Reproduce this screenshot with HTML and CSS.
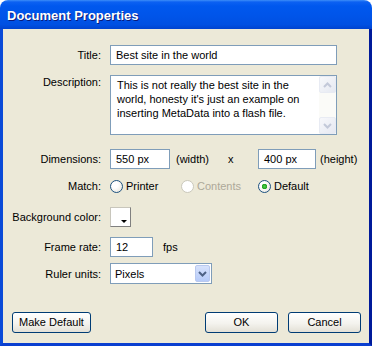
FILE: index.html
```html
<!doctype html>
<html lang="en">
<head>
	<meta charset="UTF-8">
	<title>Document Properties</title>
	<link rel="stylesheet" href="styles.css">
</head>
<body>
	<div class="window">
		<div class="titlebar">Document Properties</div>
		<div class="frame">
			<div class="row r-title">
				<span class="lbl">Title:</span>
				<div class="field f-title">Best site in the world</div>
			</div>
			<div class="row r-desc">
				<span class="lbl">Description:</span>
				<div class="area">
					<div class="area-text">This is not really the best site in the<br>world, honesty it's just an example on<br>inserting MetaData into a flash file.</div>
					<div class="scroll">
						<span class="sbtn"><svg width="9" height="6" viewBox="0 0 9 6"><path d="M1 5 L4.5 1.5 L8 5" fill="none" stroke="#c3c9d9" stroke-width="2"/></svg></span>
						<span class="track"></span>
						<span class="sbtn"><svg width="9" height="6" viewBox="0 0 9 6"><path d="M1 1 L4.5 4.5 L8 1" fill="none" stroke="#c3c9d9" stroke-width="2"/></svg></span>
					</div>
				</div>
			</div>
			<div class="row r-dims">
				<span class="lbl">Dimensions:</span>
				<div class="field f-w">550 px</div>
				<span class="unit-w">(width)</span>
				<span class="times">x</span>
				<div class="field f-h">400 px</div>
				<span class="unit-h">(height)</span>
			</div>
			<div class="row r-match">
				<span class="lbl">Match:</span>
				<span class="opt o-printer"><span class="radio"></span>Printer</span>
				<span class="opt o-contents disabled"><span class="radio"></span>Contents</span>
				<span class="opt o-default"><span class="radio checked"></span>Default</span>
			</div>
			<div class="row r-bg">
				<span class="lbl">Background color:</span>
				<span class="swatch"><span class="swatch-arrow"></span></span>
			</div>
			<div class="row r-rate">
				<span class="lbl">Frame rate:</span>
				<div class="field f-rate">12</div>
				<span class="fps">fps</span>
			</div>
			<div class="row r-ruler">
				<span class="lbl">Ruler units:</span>
				<div class="select">
					<span class="select-text">Pixels</span>
					<span class="select-btn"><svg width="9" height="6" viewBox="0 0 9 6"><path d="M1 1 L4.5 4.5 L8 1" fill="none" stroke="#4d6185" stroke-width="2"/></svg></span>
				</div>
			</div>
			<div class="buttons">
				<span class="btn b-default">Make Default</span>
				<span class="spacer"></span>
				<span class="btn b-ok">OK</span>
				<span class="btn b-cancel">Cancel</span>
			</div>
		</div>
	</div>
</body>
</html>
```
FILE: styles.css
```css
body {
	margin: 0;
	background-color: #ffffff;
	font: 400 11px "Liberation Sans", Arial, sans-serif;
	color: #000000;
}

.window {
	display: flex;
	flex-direction: column;
	width: 372px;
	height: 346px;
}

.titlebar {
	flex: none;
	height: 29px;
	padding-left: 7px;
	border-radius: 8px 8px 0 0;
	background: linear-gradient(#3d8ef8 0, #0c61f2 2px, #0058ee 6px, #0055ea 50%, #0050e2 85%, #0043cf 100%);
	color: #ffffff;
	font: 700 13px "Liberation Sans", Arial, sans-serif;
	line-height: 31px;
	text-shadow: 1px 1px #0a1a7a;
}

.frame {
	display: flex;
	flex: 1;
	flex-direction: column;
	border: 3px solid;
	border-top: 0;
	border-color: #0a4ad8 #001a9a #0a3fd0 #0a4ad8;
	background-color: #ece9d8;
}

.row {
	display: flex;
	align-items: center;
}

.lbl {
	flex: none;
	width: 98px;
	margin-right: 9px;
	text-align: right;
}

.field {
	box-sizing: border-box;
	height: 20px;
	padding: 0 5px;
	border: 1px solid #7f9db9;
	background-color: #ffffff;
	line-height: 18px;
	white-space: nowrap;
}

.r-title {
	margin-top: 16px;
}

.f-title {
	width: 227px;
}

.r-desc {
	align-items: flex-start;
	margin-top: 10px;
}

.r-desc .lbl {
	padding-top: 1px;
}

.area {
	display: flex;
	box-sizing: border-box;
	width: 227px;
	height: 60px;
	border: 1px solid #7f9db9;
	background-color: #ffffff;
}

.area-text {
	flex: 1;
	padding: 2px 6px;
	line-height: 14px;
	white-space: nowrap;
}

.scroll {
	display: flex;
	flex-direction: column;
	width: 17px;
	background-color: #fbfbf8;
}

.sbtn {
	display: flex;
	align-items: center;
	justify-content: center;
	box-sizing: border-box;
	height: 17px;
	border: 1px solid #e8ebf3;
	border-radius: 2px;
	background: linear-gradient(135deg, #f7f8fb, #e6e9f2);
}

.track {
	flex: 1;
}

.r-dims {
	margin-top: 14px;
}

.f-w {
	width: 60px;
}

.unit-w {
	width: 52px;
	margin-left: 6px;
}

.times {
	width: 30px;
}

.f-h {
	width: 58px;
}

.unit-h {
	margin-left: 4px;
}

.r-match {
	height: 16px;
	margin-top: 9px;
}

.opt {
	display: flex;
	align-items: center;
}

.o-printer {
	width: 71px;
}

.o-contents {
	width: 77px;
}

.radio {
	box-sizing: border-box;
	width: 13px;
	height: 13px;
	margin-right: 3px;
	border: 1px solid #1c5180;
	border-radius: 50%;
	background: radial-gradient(circle at 35% 35%, #ffffff 30%, #e2e0d6 100%);
}

.radio.checked {
	background: radial-gradient(circle, #4cd34c 0, #21a121 2.5px, transparent 3px), radial-gradient(circle at 35% 35%, #ffffff 30%, #e2e0d6 100%);
}

.disabled {
	color: #aca899;
}

.disabled .radio {
	border-color: #cac8bb;
	background: #ffffff;
}

.r-bg {
	margin-top: 13px;
}

.swatch {
	position: relative;
	box-sizing: border-box;
	width: 21px;
	height: 20px;
	border: 1px solid;
	border-color: #c8c6bc #808080 #808080 #c8c6bc;
	background-color: #ffffff;
}

.swatch-arrow {
	position: absolute;
	right: 3px;
	bottom: 3px;
	border: 3px solid transparent;
	border-top: 3px solid #000000;
	border-bottom: 0;
}

.r-rate {
	margin-top: 10px;
}

.f-rate {
	width: 43px;
}

.fps {
	margin-left: 10px;
}

.r-ruler {
	margin-top: 6px;
}

.select {
	display: flex;
	align-items: center;
	box-sizing: border-box;
	width: 102px;
	height: 21px;
	padding: 1px;
	border: 1px solid #7f9db9;
	background-color: #ffffff;
}

.select-text {
	flex: 1;
	padding-left: 3px;
}

.select-btn {
	display: flex;
	align-items: center;
	justify-content: center;
	box-sizing: border-box;
	width: 15px;
	height: 17px;
	border: 1px solid #b9c9ef;
	border-radius: 2px;
	background: linear-gradient(#d7e2fc, #b6cbf9);
}

.buttons {
	display: flex;
	margin-top: auto;
	padding: 0 8px 10px 9px;
}

.spacer {
	flex: 1;
}

.btn {
	box-sizing: border-box;
	height: 21px;
	border: 1px solid #003c74;
	border-radius: 3px;
	background: linear-gradient(#ffffff, #f4f3ee 55%, #e3e0d6);
	line-height: 19px;
	text-align: center;
}

.b-default {
	width: 79px;
}

.b-ok {
	width: 73px;
	margin-right: 10px;
}

.b-cancel {
	width: 73px;
}
```
